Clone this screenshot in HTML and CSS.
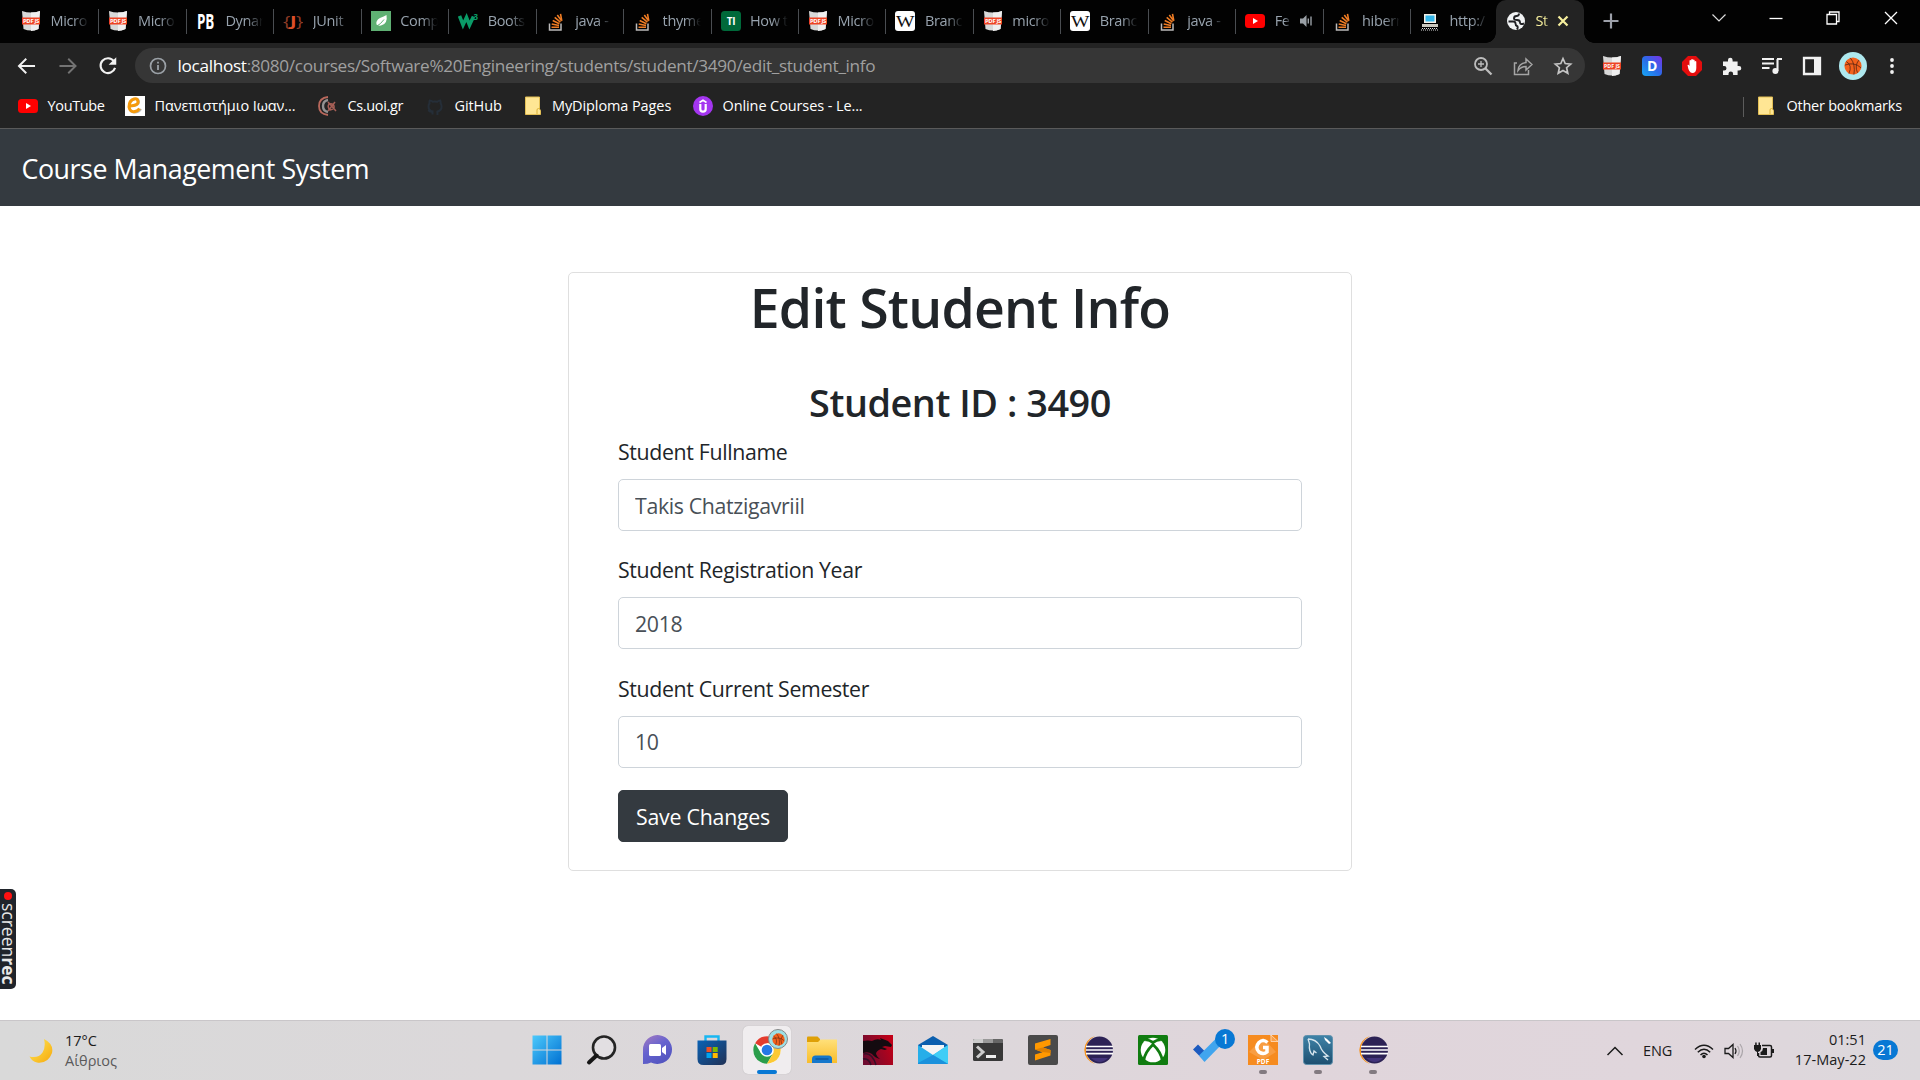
FILE: index.html
```html
<!DOCTYPE html>
<html lang="en">
<head>
<meta charset="utf-8">
<title>Student</title>
<link rel="stylesheet" href="styles.css">
</head>
<body>
<svg class="defs" width="0" height="0">
  <defs>
    <linearGradient id="g-win" x1="0" y1="0" x2="1" y2="1"><stop offset="0" stop-color="#4cc9fb"/><stop offset="1" stop-color="#0070d2"/></linearGradient>
    <linearGradient id="g-chat" x1="0" y1="0" x2="0.6" y2="1"><stop offset="0" stop-color="#a77cc0"/><stop offset="0.5" stop-color="#6663cf"/><stop offset="1" stop-color="#5355c0"/></linearGradient>
    <linearGradient id="g-store" x1="0" y1="0" x2="1" y2="1"><stop offset="0" stop-color="#0a62b5"/><stop offset="1" stop-color="#213155"/></linearGradient>
    <linearGradient id="g-folder" x1="0" y1="0" x2="0" y2="1"><stop offset="0" stop-color="#ffe07a"/><stop offset="1" stop-color="#f9bd2a"/></linearGradient>
    <linearGradient id="g-d" x1="0" y1="1" x2="1" y2="0"><stop offset="0" stop-color="#16a8f5"/><stop offset="0.5" stop-color="#2b6be8"/><stop offset="1" stop-color="#7a32e8"/></linearGradient>
    <linearGradient id="g-dragon" x1="0" y1="0.6" x2="1" y2="0.2"><stop offset="0" stop-color="#6e0c30"/><stop offset="1" stop-color="#c30017"/></linearGradient>
    <linearGradient id="g-mysql" x1="0" y1="0" x2="0" y2="1"><stop offset="0" stop-color="#3f83a8"/><stop offset="1" stop-color="#1d4f70"/></linearGradient>
    <linearGradient id="g-moon" x1="0" y1="0" x2="1" y2="1"><stop offset="0" stop-color="#ffe95a"/><stop offset="1" stop-color="#f6a90c"/></linearGradient>
    <symbol id="pdfjs" viewBox="0 0 20 20">
      <path d="M1 0q9 3 18 0l-1.500 18Q10 21 2.500 18z" fill="#d8d8d8"/><path d="M10 1.500Q15 1.500 19 0l-1.500 18q-4 2-7.500 2z" fill="#efefef"/>
      <rect x="1" y="6.500" width="18" height="7" fill="#ee4323"/>
      <text x="10" y="12.300" text-anchor="middle" textLength="16" lengthAdjust="spacingAndGlyphs" class="pdf-mark">PDF JS</text>
    </symbol>
    <symbol id="so" viewBox="0 0 20 20">
      <path d="M3.500 12.500v6.500h11.500v-6.500" fill="none" stroke="#bcbbbb" stroke-width="1.500"/>
      <path d="M5.500 16.300h7.500M5.700 13l7.300 1.500M6.700 9.600l6.700 3.100M8.700 6.400l5.700 4.700M11.300 4l4.400 6M14.500 2.800l1.300 7" stroke="#ef7c24" stroke-width="1.600"/>
    </symbol>
    <symbol id="wiki" viewBox="0 0 20 20"><rect width="20" height="20" rx="3" fill="#fff"/><text x="10" y="15.600" text-anchor="middle" textLength="18" lengthAdjust="spacingAndGlyphs" class="wiki-mark">W</text></symbol>
    <symbol id="yt" viewBox="0 0 20 20"><rect y="3" width="20" height="14" rx="3.500" fill="#f00"/><path d="M8 7v6l5-3z" fill="#fff"/></symbol>
    <symbol id="note" viewBox="0 0 16 20"><path d="M.5 1h14v12l1 1.500V18.500H.5z" fill="#ffe694" stroke="#e3bf55"/><path d="M12 18v-4q0-1.500 1.500-1.500H15" fill="none" stroke="#dcb336"/></symbol>
    <symbol id="ball" viewBox="0 0 20 20"><circle cx="10" cy="10" r="9.500" fill="#f4611c"/><path d="M1 9q10-4 18 3M7 1q6 7 4 18.500M2.500 5q7 4 3 13.500M16.500 3.500q-5 6-1.500 14" fill="none" stroke="#5a2511" stroke-width=".9"/></symbol>
    <symbol id="eclipse" viewBox="0 0 32 32"><path d="M13 2A14.500 14.500 0 0 0 13 30Q4 25 4 16T13 2z" fill="#f7941e"/><circle cx="17.500" cy="16" r="13.500" fill="#2c2255"/><path d="M9 24h17q-8 8-17 0z" fill="#42347a"/><path d="M4 12.500h27M4 16h27M4 19.600h27" stroke="#fff" stroke-width="1.700"/></symbol>
  </defs>
</svg>

<div class="browser">
  <div class="tabstrip">
    <div class="tab"><svg class="fav"><use href="#pdfjs"/></svg><span>Micro</span></div>
    <div class="tab"><svg class="fav"><use href="#pdfjs"/></svg><span>Micro</span></div>
    <div class="tab"><svg class="fav" viewBox="0 0 20 20"><text x="1" y="17.500" textLength="17" lengthAdjust="spacingAndGlyphs" class="pb-mark">PB</text></svg><span>Dynar</span></div>
    <div class="tab"><svg class="fav" viewBox="0 0 20 20"><text x="0" y="15" textLength="20" lengthAdjust="spacingAndGlyphs" class="junit-mark"><tspan class="brace">{</tspan>J<tspan class="brace">}</tspan></text></svg><span>JUnit</span></div>
    <div class="tab"><svg class="fav" viewBox="0 0 20 20"><rect width="20" height="20" fill="#5fb073"/><path d="M15.500 4Q17 13 10 14.500 7 15 5.500 13.500q-1-4 3.500-6.500 4-1.500 6.500-3z" fill="#fff"/><path d="M4.500 16Q10 13 13 8.500" stroke="#5fb073" stroke-width="1" fill="none"/></svg><span>Comp</span></div>
    <div class="tab"><svg class="fav" viewBox="0 0 20 20"><path d="M1.500 5l3.500 9L8.500 6.500l3 7.500 4-8.500" fill="none" stroke="#0a9b67" stroke-width="3.600"/><text x="15.500" y="9" class="w3-mark">3</text></svg><span>Boots</span></div>
    <div class="tab"><svg class="fav"><use href="#so"/></svg><span>java -</span></div>
    <div class="tab"><svg class="fav"><use href="#so"/></svg><span>thyme</span></div>
    <div class="tab"><svg class="fav" viewBox="0 0 20 20"><rect width="20" height="20" rx="3.500" fill="#00693a"/><text x="10" y="14" text-anchor="middle" class="ti-mark">TI</text></svg><span>How t</span></div>
    <div class="tab"><svg class="fav"><use href="#pdfjs"/></svg><span>Micro</span></div>
    <div class="tab"><svg class="fav"><use href="#wiki"/></svg><span>Branc</span></div>
    <div class="tab"><svg class="fav"><use href="#pdfjs"/></svg><span>micro</span></div>
    <div class="tab"><svg class="fav"><use href="#wiki"/></svg><span>Branc</span></div>
    <div class="tab"><svg class="fav"><use href="#so"/></svg><span>java -</span></div>
    <div class="tab playing"><svg class="fav"><use href="#yt"/></svg><span>Fe</span><svg class="sound" viewBox="0 0 14 14"><path d="M1 4.500h3L7.500 1v12L4 9.500H1z" fill="#9aa0a6"/><path d="M9.300 4.500v5M12 2.500v9" stroke="#9aa0a6" stroke-width="1.400"/></svg></div>
    <div class="tab"><svg class="fav"><use href="#so"/></svg><span>hibern</span></div>
    <div class="tab last"><svg class="fav" viewBox="0 0 20 20"><rect x="4" y="3" width="12" height="9" fill="#f2f0e8"/><rect x="5.500" y="4.500" width="9" height="6" fill="#34b6ea"/><rect x="2" y="13" width="16" height="3" fill="#c9c7be"/><path d="M2 17.500h16M1 19h18" stroke="#dedede" stroke-dasharray="1 1"/></svg><span>http:/</span></div>
    <div class="tab active"><svg class="globe" viewBox="0 0 20 20"><circle cx="10" cy="10" r="9" fill="#f1f3f4"/><path d="M2.500 10.500H7q2.500 0 2.500 2t1.500 2.500q1.500.5 0 3.500M13 2.500q0 2.500-2.500 2.500T8 7.500q0 1.500 3 1.500t3 2.500 4 1" stroke="#202124" stroke-width="1.900" fill="none"/></svg><span>St</span><svg class="x" viewBox="0 0 12 12"><path d="M1.500 1.500l9 9M10.500 1.500l-9 9" stroke="#f6ef9d" stroke-width="2.200"/></svg></div>
    <svg class="newtab" viewBox="0 0 16 16"><path d="M8 .5v15M.5 8h15" stroke="#9da1aa" stroke-width="2.200"/></svg>
    <div class="winctl">
      <svg viewBox="0 0 16 16"><path d="M1.500 4.500L8 11l6.500-6.500" fill="none" stroke="#ddd" stroke-width="1.200"/></svg>
      <svg viewBox="0 0 16 16"><path d="M1.500 8.500h13" stroke="#fff" stroke-width="1.300"/></svg>
      <svg viewBox="0 0 16 16"><path d="M2 4.500h9.500V14H2zM4.500 4V2H14v9.500h-2" fill="none" stroke="#fff" stroke-width="1.300"/></svg>
      <svg viewBox="0 0 16 16"><path d="M2 2l12 12M14 2L2 14" stroke="#fff" stroke-width="1.300"/></svg>
    </div>
  </div>

  <div class="toolbar">
    <div class="nav">
      <svg viewBox="0 0 20 20"><path d="M18.500 10H2M9.500 2.500L2 10l7.500 7.500" fill="none" stroke="#f1f1f1" stroke-width="2"/></svg>
      <svg viewBox="0 0 20 20"><path d="M1.500 10H18M10.500 2.500L18 10l-7.500 7.500" fill="none" stroke="#737373" stroke-width="2"/></svg>
      <svg viewBox="0 0 20 20"><path d="M16.300 5A7.600 7.600 0 1 0 17.500 12" fill="none" stroke="#f1f1f1" stroke-width="2.200"/><path d="M18.700 1v7.800h-7.800z" fill="#f1f1f1"/></svg>
    </div>
    <div class="omnibox">
      <svg class="info" viewBox="0 0 18 18"><circle cx="9" cy="9" r="7.500" fill="none" stroke="#9aa0a6" stroke-width="1.700"/><path d="M9 8v5M9 4.800v1.800" stroke="#9aa0a6" stroke-width="1.800"/></svg>
      <div class="url"><b>localhost</b>:8080/courses/Software%20Engineering/students/student/3490/edit_student_info</div>
      <div class="omni-icons">
        <svg viewBox="0 0 20 20"><circle cx="8" cy="8" r="6" fill="none" stroke="#bdbdbd" stroke-width="1.800"/><path d="M12.500 12.500l6 6" stroke="#bdbdbd" stroke-width="2.300"/><path d="M8 5v6M5 8h6" stroke="#bdbdbd" stroke-width="1.300"/></svg>
        <svg viewBox="0 0 20 20"><path d="M4 7H1.500v11.500h14V14M5 14.500q.5-7 8-8V3l6 5.500-6 5.500v-3.500q-5 0-8 4z" fill="none" stroke="#a5a5a5" stroke-width="1.500"/></svg>
        <svg viewBox="0 0 20 20"><path d="M10 2.500l2.200 5 5.500.6-4.100 3.600 1.200 5.500L10 14.400l-4.800 2.800 1.200-5.500-4.100-3.600 5.500-.6z" fill="none" stroke="#c4c4c4" stroke-width="1.700"/></svg>
      </div>
    </div>
    <div class="exts">
      <svg viewBox="0 0 20 20"><use href="#pdfjs"/></svg>
      <svg viewBox="0 0 20 20"><rect width="20" height="20" rx="4" fill="url(#g-d)"/><text x="10.200" y="15" text-anchor="middle" class="d-mark">D</text></svg>
      <svg viewBox="0 0 20 20"><path d="M6 0h8l6 6v8l-6 6H6l-6-6V6z" fill="#e40d0d"/><path d="M5.500 9q1-1 2 1V4.500q.9-1.200 1.700 0V9 3.500q.9-1.200 1.700 0V9 4q.9-1.100 1.700 0v5.500-4q.9-1.100 1.700 0V12q0 5-4 5-3.500 0-4.800-8z" fill="#fff"/></svg>
      <svg viewBox="0 0 20 20"><path d="M1 5.500h5V4a2.300 2.300 0 0 1 4.600 0v1.500h5V10H17a2.300 2.300 0 0 1 0 4.600h-1.400V19h-4.500v-1.200a2.300 2.300 0 0 0-4.600 0V19H1v-4.500h1.200a2.300 2.300 0 0 0 0-4.600H1z" fill="#f1f1f1"/></svg>
      <svg viewBox="0 0 20 20"><path d="M0 3h12M0 7.500h12M0 12h7.500M15.500 3v12M15 3h5" stroke="#f1f1f1" stroke-width="2.100" fill="none"/><circle cx="13.400" cy="15" r="3" fill="#f1f1f1"/></svg>
      <svg viewBox="0 0 20 20"><path d="M2 2h16v16H2z" fill="none" stroke="#f1f1f1" stroke-width="2.300"/><path d="M12 2h6v16h-6z" fill="#f1f1f1"/></svg>
      <span class="avatar"><svg viewBox="0 0 20 20"><use href="#ball"/></svg></span>
      <svg viewBox="0 0 20 20"><circle cx="10" cy="4" r="1.900" fill="#f1f1f1"/><circle cx="10" cy="10" r="1.900" fill="#f1f1f1"/><circle cx="10" cy="16" r="1.900" fill="#f1f1f1"/></svg>
    </div>
  </div>

  <div class="bookmarks">
    <div class="bm tight"><svg class="fav"><use href="#yt"/></svg>YouTube</div>
    <div class="bm"><svg class="fav" viewBox="0 0 20 20"><rect width="20" height="20" fill="#fff"/><path d="M6 10q8 0 8-4 0-4-4-3-6 1.500-5.500 9 1 5 6 4.500 4-.5 5.500-3.500" fill="none" stroke="#777" stroke-width="2" opacity=".5"/><path d="M5 10q8.500-.5 8-4.500-.5-3.500-4-2.500Q4 4.500 4 11q1 5.500 6 4.500 3-.5 4.500-3" fill="none" stroke="#f59a0c" stroke-width="3"/></svg>Πανεπιστήμιο Ιωαν...</div>
    <div class="bm tight"><svg class="fav" viewBox="0 0 20 20"><path d="M10 1Q1 2 1 10t9 9" fill="none" stroke="#b9685c" stroke-width="1.800"/><path d="M10 4q-5 1-5 6t5 6" fill="none" stroke="#929292" stroke-width="2.400"/><path d="M10 6l8 9M17 6l-7 9M11 8q4-1 5 2t-4 4q-3-3-1-6z" fill="none" stroke="#a65f56" stroke-width="1.500"/></svg>Cs.uoi.gr</div>
    <div class="bm"><svg class="fav" viewBox="0 0 20 20"><path d="M7.500 18.500v-3q-3 .8-4-1.700M7.500 15.500q-4-1-4-5 0-2 1-3-.4-1.500.3-3 1.700.2 3 1.200 2-.5 4.500 0 1.300-1 3-1.200.6 1.500.3 3 1 1.200 1 3 0 4-4.200 5v3.500" fill="none" stroke="#252e38" stroke-width="2"/></svg>GitHub</div>
    <div class="bm diploma"><svg class="folder"><use href="#note"/></svg>MyDiploma Pages</div>
    <div class="bm"><svg class="fav" viewBox="0 0 20 20"><circle cx="10" cy="10" r="10" fill="#a435f0"/><path d="M6.500 6.500L10 4.300l3.500 2.200" fill="none" stroke="#fff" stroke-width="1.600"/><path d="M7.300 8v5q0 2.700 2.700 2.700t2.700-2.700V8" fill="none" stroke="#fff" stroke-width="2.200"/></svg>Online Courses - Le...</div>
    <div class="bm other"><svg class="folder"><use href="#note"/></svg><span>Other bookmarks</span></div>
  </div>
</div>

<main class="page">
  <header class="navbar">Course Management System</header>
  <section class="card">
    <h1>Edit Student Info</h1>
    <h2>Student ID : 3490</h2>
    <form class="form">
      <label for="n">Student Fullname</label>
      <input id="n" value="Takis Chatzigavriil">
      <label for="y">Student Registration Year</label>
      <input id="y" value="2018">
      <label for="s">Student Current Semester</label>
      <input id="s" value="10">
      <button type="button">Save Changes</button>
    </form>
  </section>
  <div class="screenrec"><i></i><span>screen<b>rec</b></span></div>
</main>

<footer class="taskbar">
  <div class="weather">
    <svg viewBox="0 0 24 24"><path d="M15 0q10 5 8 14-4 11-15 9.500-5-1-7.500-6 9 2 13-4Q17 8 15 0z" fill="url(#g-moon)"/></svg>
    <div><p>17°C</p><p class="cond">Αίθριος</p></div>
  </div>
  <div class="apps">
    <div class="app"><svg viewBox="0 0 32 32"><path d="M1.500 1.500H15.500V15.500H1.500zM16.500 1.500H30.500V15.500H16.500zM1.500 16.500H15.500V30.500H1.500zM16.500 16.500H30.500V30.500H16.500z" fill="url(#g-win)"/></svg></div>
    <div class="app"><svg viewBox="0 0 32 32"><circle cx="18" cy="13.500" r="11" fill="#e2dfe2" stroke="#242424" stroke-width="2.600"/><path d="M10.500 21.500l-7.500 7" stroke="#161616" stroke-width="4" stroke-linecap="round"/></svg></div>
    <div class="app"><svg viewBox="0 0 32 32"><path d="M2 30V16A14.500 14.500 0 1 1 10 28.500Q7 30 2 30z" fill="url(#g-chat)"/><rect x="8" y="10" width="12" height="12" rx="1.500" fill="#fff"/><path d="M21 14l4-3v10l-4-3z" fill="#fff"/></svg></div>
    <div class="app"><svg viewBox="0 0 32 32"><path d="M9.500 9V2.500h13V9" fill="none" stroke="#18b7f2" stroke-width="2.400"/><path d="M1.500 6.500h29V25q0 6-6 6H7.500q-6 0-6-6z" fill="url(#g-store)"/><path d="M10.500 13h5v5h-5z" fill="#f25022"/><path d="M16.700 13h5v5h-5z" fill="#7fba00"/><path d="M10.500 19h5v5h-5z" fill="#00a4ef"/><path d="M16.700 19h5v5h-5z" fill="#ffb900"/></svg></div>
    <div class="app current"><svg viewBox="0 0 32 32"><circle cx="16" cy="16" r="13.700" fill="#fff"/><path d="M16 16L4.100 9.200A13.700 13.700 0 0 1 27.900 9.200H16z" fill="#e33b2e"/><path d="M4.100 9.200A13.700 13.700 0 0 0 16 29.700l6-10.300-12-.2z" fill="#2a9d4b"/><path d="M27.900 9.200A13.700 13.700 0 0 1 16 29.700l6-10.200q1-5-6-10.300z" fill="#fcc934"/><circle cx="16" cy="16" r="6.800" fill="#fff"/><circle cx="16" cy="16" r="5.300" fill="#2478e6"/></svg><span class="profile"><svg viewBox="0 0 20 20"><use href="#ball"/></svg></span></div>
    <div class="app"><svg viewBox="0 0 32 32"><path d="M1 3.500q0-1 1-1h9.500L14 5v4H1z" fill="#dfa007"/><path d="M1 8h11l2.500-2.500H31V29H1z" fill="url(#g-folder)"/><path d="M6 29v-4q0-3.500 3.500-3.500h13q3.500 0 3.500 3.500v4z" fill="#1577cb"/><path d="M9.500 25h13" stroke="#0b4e94" stroke-width="1.200"/></svg></div>
    <div class="app"><svg viewBox="0 0 32 32"><path d="M1 1h30v30H1z" fill="url(#g-dragon)"/><path d="M1 7q5-1 9 0 5-3 9-1l-1-2 8 3 4 4-1 2-6-1-3 1 5 2-2 1-4-1q-5 2-5 5 1 3 4 5-5-1-8-5-4-3-9-1z" fill="#140b10"/><path d="M2 20q8-2 12 11M1 25q6-1 8 6" stroke="#351027" stroke-width="1.500" fill="none"/></svg></div>
    <div class="app"><svg viewBox="0 0 32 32"><path d="M1 11L16 2l15 9v2H1z" fill="#0b5fae"/><path d="M5 11h22v10H5z" fill="#f4f4f4"/><path d="M1 11l15 10 15-10v19H1z" fill="#26aee9"/><path d="M16 21L31 11v19z" fill="#3fcdf6"/><path d="M1 30V29l15-8 15 9z" fill="#1b91dc"/></svg></div>
    <div class="app"><svg viewBox="0 0 32 32"><rect x="1" y="5" width="30" height="22" rx="1.500" fill="#383838"/><path d="M1 9V6.500Q1 5 2.500 5H11v4z" fill="#ccc"/><path d="M11 5h10v4H11z" fill="#999"/><path d="M21 5h8.500Q31 5 31 6.500V9H21z" fill="#666"/><path d="M5 12.500l6 5.500-6 5.500" fill="none" stroke="#ccc" stroke-width="3"/><path d="M14 22.500h10" stroke="#eee" stroke-width="3"/></svg></div>
    <div class="app"><svg viewBox="0 0 32 32"><rect x="1" y="1" width="30" height="30" rx="2" fill="#4a4a4a"/><path d="M8 9.500L23.500 5v6L16 13.500l7.500 2.500v5.500L8 26.500v-6l7.500-2.300L8 15.500z" fill="#ff9800"/><path d="M8 15.500l7.500-2 8 2.500v3l-8-1z" fill="#df8000"/></svg></div>
    <div class="app"><svg viewBox="0 0 32 32"><use href="#eclipse"/></svg></div>
    <div class="app"><svg viewBox="0 0 32 32"><rect x="1" y="1" width="30" height="30" rx="1.500" fill="#107c10"/><circle cx="16" cy="16" r="12.300" fill="#fff"/><path d="M8 6q3-1 8 2.500Q21 5 24 6M6.500 27Q8 18 16 10.500 24 18 25.500 27" fill="none" stroke="#107c10" stroke-width="2.800"/></svg></div>
    <div class="app"><svg viewBox="0 0 32 32"><path d="M1 15.500l5-5 11 11-5 5z" fill="#1c5abf"/><path d="M7 21.500L24 4.500l6 5.500-17.500 18z" fill="#41a5ee"/></svg><span class="count">1</span></div>
    <div class="app open"><svg viewBox="0 0 32 32"><path d="M1 1h22l8 7v23H1z" fill="#f68b1f"/><path d="M24 1h7v6.500h-7z" fill="#f68b1f"/><path d="M24 1v6.500h7z" fill="#f9a04a" stroke="#ffe0c0" stroke-width=".8"/><path d="M16 4l13 14-13 8L2 18z" fill="#faa551" opacity=".7"/><path d="M20.500 8.500Q16 4.500 12 8.500q-4.500 5 0 9.500 4.500 3 8 0v-4.500H16" fill="none" stroke="#fff" stroke-width="3.500"/><text x="16" y="29.500" text-anchor="middle" class="foxit-mark">PDF</text></svg></div>
    <div class="app open"><svg viewBox="0 0 32 32"><rect x="1.500" y="1.500" width="29" height="29" rx="3" fill="url(#g-mysql)" stroke="#5f91ad"/><path d="M6 5q8 0 12 7 2 6 8 10l-4 .5 4 3.500M6 5q1 3 1.500 5-1 8 3.500 11l1-4 2.500 2" fill="none" stroke="#d7e6ee" stroke-width="1.300"/><path d="M22 3l1 3 4 4 2-1-4-4z" fill="#fff"/></svg></div>
    <div class="app open"><svg viewBox="0 0 32 32"><use href="#eclipse"/></svg></div>
  </div>
  <div class="tray">
    <svg class="up" viewBox="0 0 18 12"><path d="M1.500 10L9 2.500l7.500 7.500" fill="none" stroke="#1b1b1b" stroke-width="1.500"/></svg>
    <span class="lang">ENG</span>
    <svg class="st" viewBox="0 0 20 20"><path d="M1 8.500q9-8.500 18 0M3.800 11.300q6.200-6 12.400 0M6.500 14q3.500-3.500 7 0" fill="none" stroke="#1b1b1b" stroke-width="1.500"/><circle cx="10" cy="15.500" r="1.800" fill="#1b1b1b"/></svg>
    <svg class="st" viewBox="0 0 20 20"><path d="M1 7.500h3.500L9 3.500v13l-4.500-4H1z" fill="none" stroke="#1b1b1b" stroke-width="1.300"/><path d="M11 7q2 3 0 6" fill="none" stroke="#1b1b1b" stroke-width="1.200"/><path d="M13.500 5q3.500 5 0 10M16 3q5 7 0 14" fill="none" stroke="#aaa5a9" stroke-width="1.200"/></svg>
    <svg class="st" viewBox="0 0 20 20"><path d="M8 4.500h8q1.500 0 1.500 1.500v8.500q0 1.500-1.500 1.500H6q-1.500 0-1.500-1.500V12" fill="none" stroke="#1b1b1b" stroke-width="1.500"/><path d="M9 7h4v7H6.500v-3q2.500-1 2.500-4zM18 8h2v4h-2zM0 4h7v4q-1 3-3 3v4H3v-4Q1 10.500 0 8zM1.200 1.500h1.500V4H1.200zM4.500 1.500H6V4H4.500z" fill="#1b1b1b"/></svg>
    <div class="clock"><p>01:51</p><p>17-May-22</p></div>
    <span class="badge">21</span>
  </div>
</footer>
</body>
</html>
```
FILE: styles.css
```css
* { box-sizing: border-box; }
body {
  margin: 0;
  width: 1920px;
  height: 1080px;
  overflow: hidden;
  display: flex;
  flex-direction: column;
  font-family: "Open Sans", "Noto Sans", sans-serif;
  background: #fff;
}
p, h1, h2 { margin: 0; }
svg { display: block; flex: none; }
.defs { position: absolute; }

/* marks inside icons */
.pdf-mark { font: 700 5.5px "Open Sans", sans-serif; fill: #fff; }
.wiki-mark { font: 17px "Liberation Serif", serif; fill: #111; }
.pb-mark { font: 700 22px "Open Sans", sans-serif; fill: #fff; }
.junit-mark { font: 700 14px "Open Sans", sans-serif; fill: #dc4f28; }
.brace { font-weight: 400; fill: #8d3b26; }
.w3-mark { font: 700 8px "Open Sans", sans-serif; fill: #0a9b67; }
.ti-mark { font: 700 10px "Open Sans", sans-serif; fill: #fff; }
.d-mark { font: 700 14px "Open Sans", sans-serif; fill: #fff; }
.foxit-mark { font: 700 6.5px "Open Sans", sans-serif; fill: #fff; }

/* browser chrome */
.browser { flex: none; height: 129px; background: #232323; border-bottom: 1px solid #5a5a5a; }
.tabstrip { display: flex; height: 43px; padding-left: 12px; background: #020202; }
.tab {
  flex: none;
  width: 87.45px;
  height: 43px;
  padding: 0 0 2px 9px;
  display: flex;
  align-items: center;
  gap: 9.5px;
  font-size: 14.5px;
  letter-spacing: -0.35px;
  color: #98a3ae;
  background: linear-gradient(#4a4d51, #4a4d51) no-repeat right 9px / 1px 25px;
}
.tab span {
  width: 40px;
  overflow: hidden;
  white-space: nowrap;
  -webkit-mask-image: linear-gradient(90deg, #000 55%, transparent 95%);
  mask-image: linear-gradient(90deg, #000 55%, transparent 95%);
}
.fav { width: 20px; height: 20px; }
.tab.playing span { width: 17px; }
.sound { width: 14px; height: 14px; margin-left: -2px; }
.last { background: none; width: 85px; }
.active {
  position: relative;
  width: 88px;
  padding-left: 10px;
  background: #232323;
  border-radius: 10px 10px 0 0;
  color: #f6ef9d;
}
.active::before, .active::after {
  content: "";
  position: absolute;
  bottom: 0;
  width: 10px;
  height: 10px;
}
.active::before { left: -10px; background: radial-gradient(circle at 0 0, transparent 9.5px, #232323 10px); }
.active::after { right: -10px; background: radial-gradient(circle at 100% 0, transparent 9.5px, #232323 10px); }
.tab.active span { width: 15px; margin-right: -3px; }
.globe { width: 20px; height: 20px; }
.x { width: 12px; height: 12px; }
.newtab { width: 16px; height: 16px; margin: 13px 0 0 19px; }
.winctl { display: flex; gap: 41.2px; margin: 10px 0 0 92px; }
.winctl svg { width: 16px; height: 16px; }

.toolbar { display: flex; height: 43px; align-items: center; padding-top: 2px; }
.nav { display: flex; gap: 21px; width: 135px; padding-left: 17px; }
.nav svg { width: 19.5px; height: 20px; }
.omnibox { display: flex; align-items: center; width: 1450px; height: 35px; border-radius: 18px; background: #363636; padding-left: 14px; }
.info { width: 18px; height: 18px; }
.url { flex: 1; margin-left: 10.5px; font-size: 17.2px; letter-spacing: -0.32px; color: #a0a0a0; white-space: nowrap; }
.url b { font-weight: 400; color: #fff; }
.omni-icons { display: flex; gap: 20px; padding-right: 12.5px; }
.omni-icons svg { width: 20px; height: 20px; }
.exts { display: flex; align-items: center; gap: 20px; margin-left: 17px; }
.exts svg { width: 20px; height: 20px; }
.avatar { width: 28px; height: 28px; margin: 0 -5px 0 -3px; border-radius: 50%; background: #aee8ee; display: grid; place-items: center; }
.avatar svg { width: 18px; height: 18px; }

.bookmarks { display: grid; grid-template-columns: 107px 193px 107px 100px 168px 1fr 177px; height: 42px; padding: 0 0 3px 18px; font-size: 14.5px; letter-spacing: -0.1px; color: #fff; }
.bm { display: flex; align-items: center; gap: 9.5px; white-space: nowrap; }
.tight { letter-spacing: -0.35px; }
.diploma { gap: 11px; }
.folder { width: 16px; height: 20px; }
.other { background: linear-gradient(#5c5c5c, #5c5c5c) no-repeat 0 11px / 1px 20px; padding-left: 15px; gap: 12.5px; letter-spacing: -0.25px; }

/* page */
.page { position: relative; flex: 1; }
.navbar { height: 77px; padding-left: 21.5px; background: #343a40; color: #fff; font-size: 26.8px; line-height: 80px; letter-spacing: -0.44px; }
.card { width: 784px; height: 599px; margin: 66px auto 0; border: 1px solid #dfdfdf; border-radius: 5px; text-align: center; color: #212529; }
h1 { font-size: 53.5px; font-weight: 600; line-height: 66px; margin-top: 2px; letter-spacing: -0.75px; }
h2 { font-size: 37.8px; font-weight: 600; line-height: 46px; margin-top: 39px; letter-spacing: -0.45px; }
.form { display: flex; flex-direction: column; align-items: flex-start; padding: 0 49px; margin-top: 9px; }
label { font-size: 21.3px; line-height: 33px; height: 44px; letter-spacing: -0.34px; }
input, button {
  font: 21.3px/33px "Open Sans", "Noto Sans", sans-serif;
  letter-spacing: -0.34px;
  height: 52px;
  padding: 0 16px;
  border: 1px solid #ced4da;
  border-radius: 5px;
}
input { width: 684px; margin-bottom: 22.4px; background: #fff; color: #495057; }
button { width: 170px; background: #343a40; border-color: #343a40; color: #fff; white-space: nowrap; letter-spacing: -0.22px; }

.screenrec { position: absolute; left: 0; top: 760px; width: 16px; height: 100px; border-radius: 0 5px 5px 0; background: #20242b; color: #e8e8e8; }
.screenrec i { position: absolute; left: 3.5px; top: 3px; width: 8px; height: 8px; border-radius: 50%; background: #f11; }
.screenrec span { position: absolute; left: 1px; top: 14px; writing-mode: vertical-rl; font: 17.5px/15px "Open Sans", sans-serif; letter-spacing: 0; }

/* taskbar */
.taskbar { flex: none; display: flex; height: 60px; border-top: 1px solid #c9c6c9; background: linear-gradient(90deg, #d9d9d9 0, #dbd8da 500px, #ddd7db 1000px, #e0d5db 1300px, #e0d6dc 1650px, #dcd8dc 1920px); color: #1b1b1b; font-size: 14.5px; }
.weather { display: flex; width: 523px; padding: 15px 0 0 29px; gap: 12px; line-height: 20px; }
.weather svg { width: 24px; height: 24px; margin: 3px 0 0; }
.weather div { margin-top: -5px; }
.cond { color: #5a595a; }
.apps { display: flex; gap: 7.1px; padding-top: 5px; }
.app { position: relative; width: 48px; height: 48px; display: grid; place-items: center; border-radius: 5px; }
.app > svg { width: 32px; height: 32px; }
.current { background: #f0edef; box-shadow: 0 0 1px #aaa; }
.current::after, .open::after { content: ""; position: absolute; bottom: 0; left: 14px; width: 20px; height: 4px; border-radius: 2px; background: #0878d4; }
.open::after { left: 20px; width: 8px; background: #827a80; }
.profile { position: absolute; right: 3px; top: 3px; width: 20px; height: 20px; border-radius: 50%; background: #9de0e6; border: 1px solid #888; display: grid; place-items: center; }
.profile svg { width: 13px; height: 13px; }
.count { position: absolute; right: -3px; top: 3px; width: 20px; height: 20px; border-radius: 50%; background: #0878d4; color: #fff; text-align: center; line-height: 20px; }
.tray { display: flex; align-items: center; margin-left: auto; padding-right: 22px; }
.up { width: 18px; height: 12px; margin-right: 19px; }
.lang { width: 51px; letter-spacing: -0.1px; }
.st { width: 20px; height: 20px; margin-right: 10px; }
.clock { width: 82px; margin-top: -2px; text-align: right; line-height: 20px; letter-spacing: 0.03px; }
.badge { width: 25px; height: 20px; margin: -1px 0 0 7px; border-radius: 10px; background: #0878d4; color: #fff; text-align: center; line-height: 20px; }
```
